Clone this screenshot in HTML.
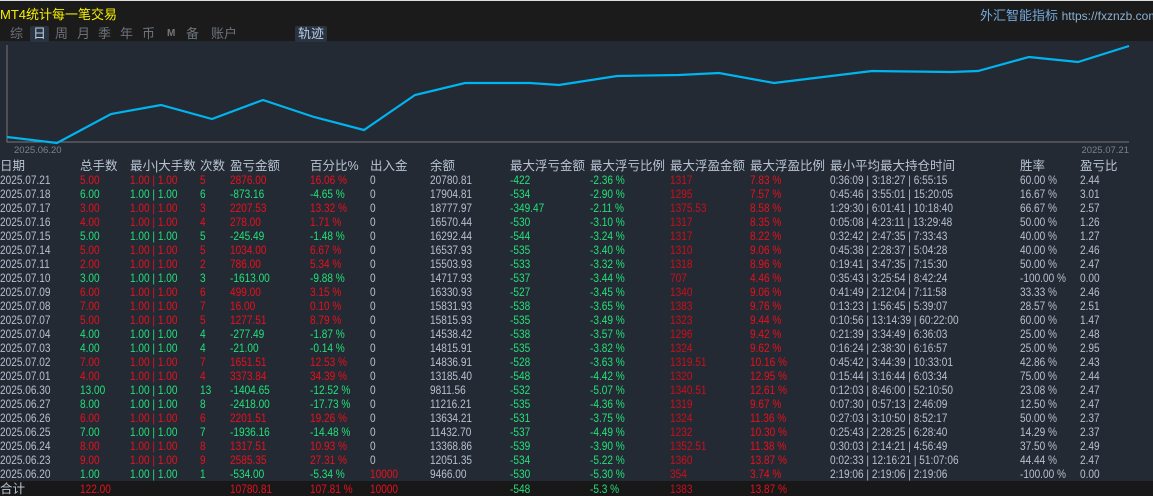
<!DOCTYPE html>
<html><head><meta charset="utf-8"><style>
body{margin:0;width:1153px;height:496px;background:#242a33;overflow:hidden;position:relative;font-family:"Liberation Sans","Noto Sans CJK SC",sans-serif;font-size:12px;color:#b4c0d0}
.top{position:absolute;left:0;top:0;width:1153px;height:41px;background:#1b1b1b;border-top:1px solid #ddd;box-sizing:border-box}
.t{position:absolute;white-space:nowrap}
.tab{position:absolute;top:25px;font-size:13px;color:#6c737c;line-height:16px}
.sel{background:#2a3340;color:#b8cce6;padding:0 3px;border-radius:2px}
.r{position:absolute;left:0;width:1153px;height:14px;line-height:14px}
.r span{position:absolute;white-space:nowrap;transform:scaleX(0.84);transform-origin:0 50%}
.r.hd span{transform:none}
.a{left:0}.b{left:80px}.c{left:130px}.d{left:200px}.e{left:230px}.f{left:310px}.g{left:370px}.h{left:430px}.i{left:510px}.j{left:590px}.k{left:670px}.l{left:750px}.m{left:830px}.n{left:1020px}.o{left:1080px}
.R{color:#e8101c}.G{color:#22e07a}.D{color:#c8101c}
.hd{color:#b8c4d4;font-size:12.5px}
.foot{position:absolute;left:0;top:481px;width:1153px;height:15px;background:#181818}
</style></head><body>
<div class="top">
<div class="t" style="left:0;top:3px;color:#f5f000;font-size:13px">MT4统计每一笔交易</div>
<div class="t" style="left:980px;top:4px;color:#74a8dc;font-size:13px">外汇智能指标 <span style="color:#8ab0d0;font-size:12px">https://fxznzb.com/</span></div>
<span class="tab" style="left:10px">综</span>
<span class="tab sel" style="left:30px">日</span>
<span class="tab" style="left:55px">周</span>
<span class="tab" style="left:77px">月</span>
<span class="tab" style="left:98px">季</span>
<span class="tab" style="left:120px">年</span>
<span class="tab" style="left:142px">币</span>
<span class="tab" style="left:167px;font-size:10px;color:#777;font-weight:bold">M</span>
<span class="tab" style="left:186px">备</span>
<span class="tab" style="left:211px">账户</span>
<span class="tab sel" style="left:295px">轨迹</span>
</div>
<svg style="position:absolute;left:0;top:0" width="1153" height="160">
<polyline points="7,45 7,142 1129,142" fill="none" stroke="#777" stroke-width="1"/>
<polyline points="7,137 57,143 111,114 161,105 212,119 263,100 314,117 364,130 415,95 465,83 530,83 559,85 617,76 679,75 719,73 774,83 872,71 951,72 978,71 1029,57 1078,62 1129,46" fill="none" stroke="#00b4f0" stroke-width="2.2"/>
<text x="14" y="153" fill="#7a8290" font-size="9.5" font-family="Liberation Sans">2025.06.20</text>
<text x="1129" y="153" fill="#7a8290" font-size="9.5" font-family="Liberation Sans" text-anchor="end">2025.07.21</text>
</svg>
<div class="r hd" style="top:159px"><span class="a">日期</span><span class="b">总手数</span><span class="c">最小|大手数</span><span class="d">次数</span><span class="e">盈亏金额</span><span class="f">百分比%</span><span class="g">出入金</span><span class="h">余额</span><span class="i">最大浮亏金额</span><span class="j">最大浮亏比例</span><span class="k">最大浮盈金额</span><span class="l">最大浮盈比例</span><span class="m">最小平均最大持仓时间</span><span class="n">胜率</span><span class="o">盈亏比</span></div>

<div class="r" style="top:173px"><span class="a">2025.07.21</span><span class="b R">5.00</span><span class="c R">1.00 | 1.00</span><span class="d R">5</span><span class="e R">2876.00</span><span class="f R">16.06 %</span><span class="g">0</span><span class="h">20780.81</span><span class="i G">-422</span><span class="j G">-2.36 %</span><span class="k D">1317</span><span class="l R">7.83 %</span><span class="m">0:36:09 | 3:18:27 | 6:55:15</span><span class="n">60.00 %</span><span class="o">2.44</span></div>
<div class="r" style="top:187px"><span class="a">2025.07.18</span><span class="b G">6.00</span><span class="c G">1.00 | 1.00</span><span class="d G">6</span><span class="e G">-873.16</span><span class="f G">-4.65 %</span><span class="g">0</span><span class="h">17904.81</span><span class="i G">-534</span><span class="j G">-2.90 %</span><span class="k D">1295</span><span class="l R">7.57 %</span><span class="m">0:45:46 | 3:55:01 | 15:20:05</span><span class="n">16.67 %</span><span class="o">3.01</span></div>
<div class="r" style="top:201px"><span class="a">2025.07.17</span><span class="b R">3.00</span><span class="c R">1.00 | 1.00</span><span class="d R">3</span><span class="e R">2207.53</span><span class="f R">13.32 %</span><span class="g">0</span><span class="h">18777.97</span><span class="i G">-349.47</span><span class="j G">-2.11 %</span><span class="k D">1375.53</span><span class="l R">8.58 %</span><span class="m">1:29:30 | 6:01:41 | 10:18:40</span><span class="n">66.67 %</span><span class="o">2.57</span></div>
<div class="r" style="top:215px"><span class="a">2025.07.16</span><span class="b R">4.00</span><span class="c R">1.00 | 1.00</span><span class="d R">4</span><span class="e R">278.00</span><span class="f R">1.71 %</span><span class="g">0</span><span class="h">16570.44</span><span class="i G">-530</span><span class="j G">-3.10 %</span><span class="k D">1317</span><span class="l R">8.35 %</span><span class="m">0:05:08 | 4:23:11 | 13:29:48</span><span class="n">50.00 %</span><span class="o">1.26</span></div>
<div class="r" style="top:229px"><span class="a">2025.07.15</span><span class="b G">5.00</span><span class="c G">1.00 | 1.00</span><span class="d G">5</span><span class="e G">-245.49</span><span class="f G">-1.48 %</span><span class="g">0</span><span class="h">16292.44</span><span class="i G">-544</span><span class="j G">-3.24 %</span><span class="k D">1317</span><span class="l R">8.22 %</span><span class="m">0:32:42 | 2:47:35 | 7:33:43</span><span class="n">40.00 %</span><span class="o">1.27</span></div>
<div class="r" style="top:243px"><span class="a">2025.07.14</span><span class="b R">5.00</span><span class="c R">1.00 | 1.00</span><span class="d R">5</span><span class="e R">1034.00</span><span class="f R">6.67 %</span><span class="g">0</span><span class="h">16537.93</span><span class="i G">-535</span><span class="j G">-3.40 %</span><span class="k D">1310</span><span class="l R">9.06 %</span><span class="m">0:45:38 | 2:28:37 | 5:04:28</span><span class="n">40.00 %</span><span class="o">2.46</span></div>
<div class="r" style="top:257px"><span class="a">2025.07.11</span><span class="b R">2.00</span><span class="c R">1.00 | 1.00</span><span class="d R">2</span><span class="e R">786.00</span><span class="f R">5.34 %</span><span class="g">0</span><span class="h">15503.93</span><span class="i G">-533</span><span class="j G">-3.32 %</span><span class="k D">1318</span><span class="l R">8.96 %</span><span class="m">0:19:41 | 3:47:35 | 7:15:30</span><span class="n">50.00 %</span><span class="o">2.47</span></div>
<div class="r" style="top:271px"><span class="a">2025.07.10</span><span class="b G">3.00</span><span class="c G">1.00 | 1.00</span><span class="d G">3</span><span class="e G">-1613.00</span><span class="f G">-9.88 %</span><span class="g">0</span><span class="h">14717.93</span><span class="i G">-537</span><span class="j G">-3.44 %</span><span class="k D">707</span><span class="l R">4.46 %</span><span class="m">0:35:43 | 3:25:54 | 8:42:24</span><span class="n">-100.00 %</span><span class="o">0.00</span></div>
<div class="r" style="top:285px"><span class="a">2025.07.09</span><span class="b R">6.00</span><span class="c R">1.00 | 1.00</span><span class="d R">6</span><span class="e R">499.00</span><span class="f R">3.15 %</span><span class="g">0</span><span class="h">16330.93</span><span class="i G">-527</span><span class="j G">-3.45 %</span><span class="k D">1340</span><span class="l R">9.06 %</span><span class="m">0:41:49 | 2:12:04 | 7:11:58</span><span class="n">33.33 %</span><span class="o">2.46</span></div>
<div class="r" style="top:299px"><span class="a">2025.07.08</span><span class="b R">7.00</span><span class="c R">1.00 | 1.00</span><span class="d R">7</span><span class="e R">16.00</span><span class="f R">0.10 %</span><span class="g">0</span><span class="h">15831.93</span><span class="i G">-538</span><span class="j G">-3.65 %</span><span class="k D">1383</span><span class="l R">9.76 %</span><span class="m">0:13:23 | 1:56:45 | 5:39:07</span><span class="n">28.57 %</span><span class="o">2.51</span></div>
<div class="r" style="top:313px"><span class="a">2025.07.07</span><span class="b R">5.00</span><span class="c R">1.00 | 1.00</span><span class="d R">5</span><span class="e R">1277.51</span><span class="f R">8.79 %</span><span class="g">0</span><span class="h">15815.93</span><span class="i G">-535</span><span class="j G">-3.49 %</span><span class="k D">1323</span><span class="l R">9.44 %</span><span class="m">0:10:56 | 13:14:39 | 60:22:00</span><span class="n">60.00 %</span><span class="o">1.47</span></div>
<div class="r" style="top:327px"><span class="a">2025.07.04</span><span class="b G">4.00</span><span class="c G">1.00 | 1.00</span><span class="d G">4</span><span class="e G">-277.49</span><span class="f G">-1.87 %</span><span class="g">0</span><span class="h">14538.42</span><span class="i G">-538</span><span class="j G">-3.57 %</span><span class="k D">1296</span><span class="l R">9.42 %</span><span class="m">0:21:39 | 3:34:49 | 6:36:03</span><span class="n">25.00 %</span><span class="o">2.48</span></div>
<div class="r" style="top:341px"><span class="a">2025.07.03</span><span class="b G">4.00</span><span class="c G">1.00 | 1.00</span><span class="d G">4</span><span class="e G">-21.00</span><span class="f G">-0.14 %</span><span class="g">0</span><span class="h">14815.91</span><span class="i G">-535</span><span class="j G">-3.82 %</span><span class="k D">1324</span><span class="l R">9.62 %</span><span class="m">0:16:24 | 2:38:30 | 6:16:57</span><span class="n">25.00 %</span><span class="o">2.95</span></div>
<div class="r" style="top:355px"><span class="a">2025.07.02</span><span class="b R">7.00</span><span class="c R">1.00 | 1.00</span><span class="d R">7</span><span class="e R">1651.51</span><span class="f R">12.53 %</span><span class="g">0</span><span class="h">14836.91</span><span class="i G">-528</span><span class="j G">-3.63 %</span><span class="k D">1319.51</span><span class="l R">10.16 %</span><span class="m">0:45:42 | 3:44:39 | 10:33:01</span><span class="n">42.86 %</span><span class="o">2.43</span></div>
<div class="r" style="top:369px"><span class="a">2025.07.01</span><span class="b R">4.00</span><span class="c R">1.00 | 1.00</span><span class="d R">4</span><span class="e R">3373.84</span><span class="f R">34.39 %</span><span class="g">0</span><span class="h">13185.40</span><span class="i G">-548</span><span class="j G">-4.42 %</span><span class="k D">1320</span><span class="l R">12.95 %</span><span class="m">0:15:44 | 3:16:44 | 6:03:34</span><span class="n">75.00 %</span><span class="o">2.44</span></div>
<div class="r" style="top:383px"><span class="a">2025.06.30</span><span class="b G">13.00</span><span class="c G">1.00 | 1.00</span><span class="d G">13</span><span class="e G">-1404.65</span><span class="f G">-12.52 %</span><span class="g">0</span><span class="h">9811.56</span><span class="i G">-532</span><span class="j G">-5.07 %</span><span class="k D">1340.51</span><span class="l R">12.61 %</span><span class="m">0:12:03 | 8:46:00 | 52:10:50</span><span class="n">23.08 %</span><span class="o">2.47</span></div>
<div class="r" style="top:397px"><span class="a">2025.06.27</span><span class="b G">8.00</span><span class="c G">1.00 | 1.00</span><span class="d G">8</span><span class="e G">-2418.00</span><span class="f G">-17.73 %</span><span class="g">0</span><span class="h">11216.21</span><span class="i G">-535</span><span class="j G">-4.36 %</span><span class="k D">1319</span><span class="l R">9.67 %</span><span class="m">0:07:30 | 0:57:13 | 2:46:09</span><span class="n">12.50 %</span><span class="o">2.47</span></div>
<div class="r" style="top:411px"><span class="a">2025.06.26</span><span class="b R">6.00</span><span class="c R">1.00 | 1.00</span><span class="d R">6</span><span class="e R">2201.51</span><span class="f R">19.26 %</span><span class="g">0</span><span class="h">13634.21</span><span class="i G">-531</span><span class="j G">-3.75 %</span><span class="k D">1324</span><span class="l R">11.36 %</span><span class="m">0:27:03 | 3:10:50 | 8:52:17</span><span class="n">50.00 %</span><span class="o">2.37</span></div>
<div class="r" style="top:425px"><span class="a">2025.06.25</span><span class="b G">7.00</span><span class="c G">1.00 | 1.00</span><span class="d G">7</span><span class="e G">-1936.16</span><span class="f G">-14.48 %</span><span class="g">0</span><span class="h">11432.70</span><span class="i G">-537</span><span class="j G">-4.49 %</span><span class="k D">1232</span><span class="l R">10.30 %</span><span class="m">0:25:43 | 2:28:25 | 6:28:40</span><span class="n">14.29 %</span><span class="o">2.37</span></div>
<div class="r" style="top:439px"><span class="a">2025.06.24</span><span class="b R">8.00</span><span class="c R">1.00 | 1.00</span><span class="d R">8</span><span class="e R">1317.51</span><span class="f R">10.93 %</span><span class="g">0</span><span class="h">13368.86</span><span class="i G">-539</span><span class="j G">-3.90 %</span><span class="k D">1352.51</span><span class="l R">11.38 %</span><span class="m">0:30:03 | 2:14:21 | 4:56:49</span><span class="n">37.50 %</span><span class="o">2.49</span></div>
<div class="r" style="top:453px"><span class="a">2025.06.23</span><span class="b R">9.00</span><span class="c R">1.00 | 1.00</span><span class="d R">9</span><span class="e R">2585.35</span><span class="f R">27.31 %</span><span class="g">0</span><span class="h">12051.35</span><span class="i G">-534</span><span class="j G">-5.22 %</span><span class="k D">1360</span><span class="l R">13.87 %</span><span class="m">0:02:33 | 12:16:21 | 51:07:06</span><span class="n">44.44 %</span><span class="o">2.47</span></div>
<div class="r" style="top:467px"><span class="a">2025.06.20</span><span class="b G">1.00</span><span class="c G">1.00 | 1.00</span><span class="d G">1</span><span class="e G">-534.00</span><span class="f G">-5.34 %</span><span class="g R">10000</span><span class="h">9466.00</span><span class="i G">-530</span><span class="j G">-5.30 %</span><span class="k D">354</span><span class="l R">3.74 %</span><span class="m">2:19:06 | 2:19:06 | 2:19:06</span><span class="n">-100.00 %</span><span class="o">0.00</span></div>
<div class="foot"></div>
<div class="r" style="top:482px"><span class="a hd" style="transform:none">合计</span><span class="b R">122.00</span><span class="e R">10780.81</span><span class="f R">107.81 %</span><span class="g R">10000</span><span class="i G">-548</span><span class="j G">-5.3 %</span><span class="k D">1383</span><span class="l R">13.87 %</span></div>
</body></html>
